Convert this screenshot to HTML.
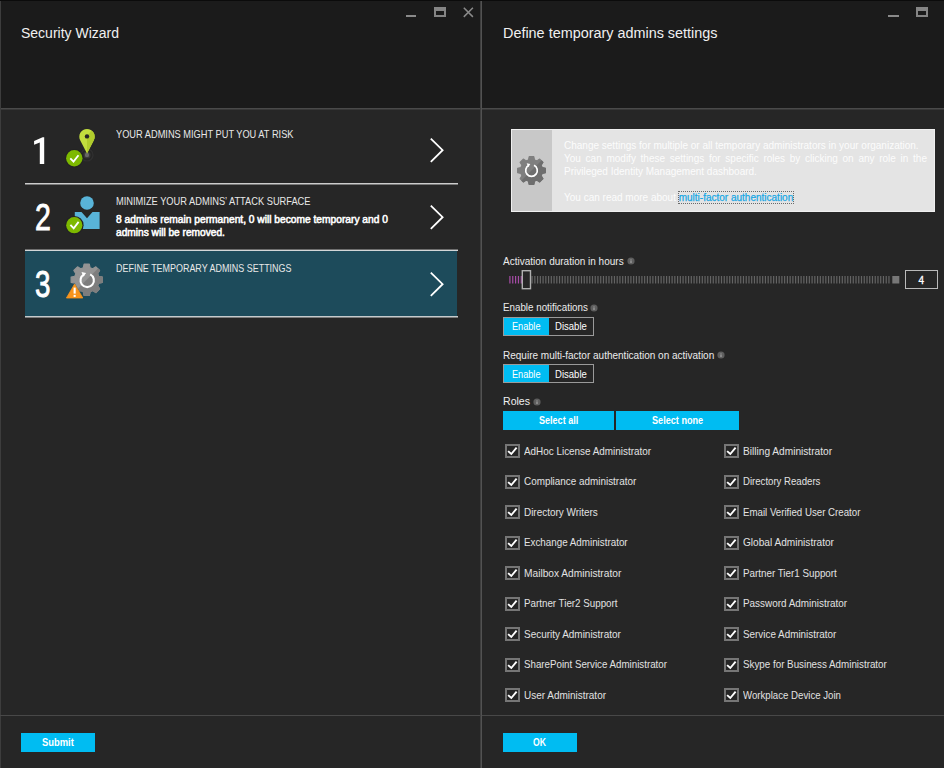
<!DOCTYPE html>
<html><head><meta charset="utf-8">
<style>
*{margin:0;padding:0;box-sizing:border-box}
html,body{width:944px;height:768px;overflow:hidden;background:#262626;font-family:"Liberation Sans",sans-serif;color:#fff}
.a{position:absolute;white-space:nowrap;line-height:1;transform-origin:0 0}
</style></head><body>
<div style="position:absolute;left:0;top:0;width:481px;height:108px;background:#1b1b1b"></div>
<div style="position:absolute;left:0;top:108px;width:481px;height:1px;background:#4a4a4a"></div>
<div style="position:absolute;left:0;top:109px;width:481px;height:1px;background:#383838"></div>
<div style="position:absolute;left:0;top:0;width:1px;height:768px;background:#3d3d3d"></div>
<div class="a" style="left:21.00px;top:26.15px;font-size:14px;color:#f0f0f0;">Security Wizard</div>
<div style="position:absolute;left:406px;top:15px;width:10px;height:2px;background:#8a8a8a"></div>
<div style="position:absolute;left:434px;top:7px;width:11.5px;height:10px;border:2px solid #858585;border-top-width:4px"></div>
<svg class="a" style="left:462px;top:5.5px" width="13" height="13" viewBox="0 0 13 13"><path d="M1.8 1.8L10.9 10.9M10.9 1.8L1.8 10.9" stroke="#8a8a8a" stroke-width="1.5"/></svg>
<div style="position:absolute;left:25px;top:251px;width:432px;height:65px;background:#1d4b5b"></div>
<div style="position:absolute;left:25px;top:183px;width:433px;height:1px;background:#cccccc"></div>
<div style="position:absolute;left:25px;top:184px;width:433px;height:1px;background:#787878"></div>
<div style="position:absolute;left:25px;top:249px;width:433px;height:1px;background:#6e6e6e"></div>
<div style="position:absolute;left:25px;top:250px;width:433px;height:1px;background:#d2d6d8"></div>
<div style="position:absolute;left:25px;top:316px;width:433px;height:1px;background:#c6cbcd"></div>
<div style="position:absolute;left:25px;top:317px;width:433px;height:1px;background:#7c7c7c"></div>
<svg class="a" style="left:0;top:0" width="60" height="170" viewBox="0 0 60 170"><path d="M44.2 137.2V163.9H39.8V142.6L34.1 144.8V140.9L42.6 137.2Z" fill="#fff"/></svg>
<div class="a" style="left:35.00px;top:198.98px;font-size:37px;color:#fff;transform:scaleX(0.7694);-webkit-text-stroke:0.9px #fff;">2</div>
<div class="a" style="left:35.20px;top:266.08px;font-size:37px;color:#fff;transform:scaleX(0.7499);-webkit-text-stroke:0.9px #fff;">3</div>
<div class="a" style="left:115.50px;top:129.41px;font-size:10.5px;color:#e8e8e8;transform:scaleX(0.8809);">YOUR ADMINS MIGHT PUT YOU AT RISK</div>
<div class="a" style="left:115.50px;top:196.41px;font-size:10.5px;color:#e8e8e8;transform:scaleX(0.8836);">MINIMIZE YOUR ADMINS’ ATTACK SURFACE</div>
<div class="a" style="left:115.80px;top:213.71px;font-size:10.5px;color:#fff;transform:scaleX(0.9726);-webkit-text-stroke:0.55px #fff;">8 admins remain permanent, 0 will become temporary and 0</div>
<div class="a" style="left:115.80px;top:226.91px;font-size:10.5px;color:#fff;transform:scaleX(0.9670);-webkit-text-stroke:0.55px #fff;">admins will be removed.</div>
<div class="a" style="left:115.50px;top:263.41px;font-size:10.5px;color:#e8e8e8;transform:scaleX(0.8521);">DEFINE TEMPORARY ADMINS SETTINGS</div>
<svg class="a" style="left:420px;top:130.2px" width="30" height="40" viewBox="0 0 30 40"><path d="M10.8 8.6L22.6 20.2L10.8 31.8" fill="none" stroke="#fff" stroke-width="1.8"/></svg>
<svg class="a" style="left:420px;top:197px" width="30" height="40" viewBox="0 0 30 40"><path d="M10.8 8.6L22.6 20.2L10.8 31.8" fill="none" stroke="#fff" stroke-width="1.8"/></svg>
<svg class="a" style="left:420px;top:264px" width="30" height="40" viewBox="0 0 30 40"><path d="M10.8 8.6L22.6 20.2L10.8 31.8" fill="none" stroke="#fff" stroke-width="1.8"/></svg>
<svg class="a" style="left:60px;top:120px" width="50" height="50" viewBox="0 0 50 50">
  <circle cx="27" cy="35" r="6" fill="none" stroke="#303030" stroke-width="1.2"/>
  <circle cx="27" cy="35" r="3.6" fill="#383838"/>
  <circle cx="27" cy="35" r="2.2" fill="#666"/>
  <path d="M27 33.5 L20.3 20.5 A7.7 7.7 0 1 1 33.7 20.5 Z" fill="#c2de3e"/>
  <path d="M27 33.5 L33.7 20.5 A7.7 7.7 0 0 0 31.5 10.5 L27 16.4 Z" fill="#b0cc2c"/>
  <circle cx="27" cy="16.4" r="2.2" fill="#262626"/>
  <circle cx="14.3" cy="38.3" r="9.2" fill="#232323"/>
  <circle cx="14.3" cy="38.3" r="8.2" fill="#7db900"/>
  <path d="M10.3 38.3L13.5 41.6L18.5 35.3" fill="none" stroke="#fff" stroke-width="1.8"/>
</svg>
<svg class="a" style="left:60px;top:190px" width="50" height="50" viewBox="0 0 50 50">
  <circle cx="27" cy="13" r="6.8" fill="#59b4d9"/>
  <path d="M14.8 22.1H21.5L27 28.3L32.5 22.1H39.6V39H14.8Z" fill="#59b4d9"/>
  <circle cx="14.3" cy="35.2" r="9.3" fill="#232323"/>
  <circle cx="14.3" cy="35.2" r="8.1" fill="#7db900"/>
  <path d="M10.4 34.8L13.7 38.4L18.6 31.9" fill="none" stroke="#fff" stroke-width="1.8"/>
</svg>
<svg class="a" style="left:60px;top:255px" width="50" height="50" viewBox="0 0 50 50">
  <defs><clipPath id="g1"><path d="M18 -18L-18 18H18Z"/></clipPath></defs>
  <g transform="translate(26.7 24.7)">
    <path d="M-3.42 -11.92L-2.61 -15.58L2.61 -15.58L3.42 -11.92L6.01 -10.85L9.18 -12.86L12.86 -9.18L10.85 -6.01L11.92 -3.42L15.58 -2.61L15.58 2.61L11.92 3.42L10.85 6.01L12.86 9.18L9.18 12.86L6.01 10.85L3.42 11.92L2.61 15.58L-2.61 15.58L-3.42 11.92L-6.01 10.85L-9.18 12.86L-12.86 9.18L-10.85 6.01L-11.92 3.42L-15.58 2.61L-15.58 -2.61L-11.92 -3.42L-10.85 -6.01L-12.86 -9.18L-9.18 -12.86L-6.01 -10.85Z" fill="#949494" stroke="#949494" stroke-width="1.2" stroke-linejoin="round"/>
    <path d="M-3.42 -11.92L-2.61 -15.58L2.61 -15.58L3.42 -11.92L6.01 -10.85L9.18 -12.86L12.86 -9.18L10.85 -6.01L11.92 -3.42L15.58 -2.61L15.58 2.61L11.92 3.42L10.85 6.01L12.86 9.18L9.18 12.86L6.01 10.85L3.42 11.92L2.61 15.58L-2.61 15.58L-3.42 11.92L-6.01 10.85L-9.18 12.86L-12.86 9.18L-10.85 6.01L-11.92 3.42L-15.58 2.61L-15.58 -2.61L-11.92 -3.42L-10.85 -6.01L-12.86 -9.18L-9.18 -12.86L-6.01 -10.85Z" fill="#7e7e7e" stroke="#7e7e7e" stroke-width="1.2" stroke-linejoin="round" clip-path="url(#g1)"/>
    <path d="M-2.5 -5.3A6.7 6.7 0 1 0 3.5 -5.3" fill="none" stroke="#fff" stroke-width="2.1"/>
    <path d="M-5.2 -7.8L-0.6 -6.6L-3.4 -3Z" fill="#fff"/>
  </g>
  <path d="M14.6 28.2L5.4 43.6H23.8Z" fill="#1f4a59"/>
  <path d="M14.6 29L6.4 43H22.8Z" fill="#f7941d" stroke="#f7941d" stroke-width="0.8" stroke-linejoin="round"/>
  <rect x="13.6" y="32.6" width="2.1" height="6" fill="#fff"/>
  <rect x="13.6" y="39.9" width="2.1" height="2" fill="#fff"/>
</svg>
<div style="position:absolute;left:0;top:715px;width:481px;height:1px;background:#484848"></div>
<div style="position:absolute;left:21px;top:733px;width:74px;height:19px;background:#00bcf2"></div>
<div class="a" style="left:42.00px;top:737.41px;font-size:10.5px;font-weight:bold;color:#fff;transform:scaleX(0.8934);">Submit</div>
<div style="position:absolute;left:480px;top:0;width:1px;height:768px;background:#3e3e3e"></div>
<div style="position:absolute;left:481px;top:0;width:1px;height:768px;background:#525252"></div>
<div style="position:absolute;left:482px;top:0;width:462px;height:108px;background:#1b1b1b"></div>
<div style="position:absolute;left:482px;top:108px;width:462px;height:1px;background:#4a4a4a"></div>
<div style="position:absolute;left:482px;top:109px;width:462px;height:1px;background:#383838"></div>
<div class="a" style="left:503.00px;top:26.15px;font-size:14px;color:#f0f0f0;transform:scaleX(1.0286);">Define temporary admins settings</div>
<div style="position:absolute;left:888px;top:15px;width:11px;height:2px;background:#8a8a8a"></div>
<div style="position:absolute;left:916px;top:7px;width:12px;height:10px;border:2px solid #858585;border-top-width:4px"></div>
<div style="position:absolute;left:511px;top:129px;width:424px;height:83px;background:#e4e4e4;border:1px solid #efefef"></div>
<div style="position:absolute;left:512px;top:130px;width:40px;height:81px;background:#c8c8c8"></div>
<div style="position:absolute;left:564px;top:139px;width:363px;font-size:10px;line-height:13.1px;color:#fcfcfc;text-align:justify">Change settings for multiple or all temporary administrators in your organization.<br>You can modify these settings for specific roles by clicking on any role in the Privileged Identity Management dashboard.<br><br>You can read more about <span style="color:#19a8e4;-webkit-text-stroke:0.25px #19a8e4;outline:1px dotted #6a6a6a;outline-offset:0.5px">multi-factor authentication</span></div>
<svg class="a" style="left:512px;top:151px" width="40" height="40" viewBox="0 0 40 40">
 <defs><clipPath id="g2"><path d="M16 -16L-16 16H16Z"/></clipPath></defs>
 <g transform="translate(19.5 19.5)"><path d="M-3.03 -10.57L-2.33 -13.91L2.33 -13.91L3.03 -10.57L5.33 -9.62L8.19 -11.48L11.48 -8.19L9.62 -5.33L10.57 -3.03L13.91 -2.33L13.91 2.33L10.57 3.03L9.62 5.33L11.48 8.19L8.19 11.48L5.33 9.62L3.03 10.57L2.33 13.91L-2.33 13.91L-3.03 10.57L-5.33 9.62L-8.19 11.48L-11.48 8.19L-9.62 5.33L-10.57 3.03L-13.91 2.33L-13.91 -2.33L-10.57 -3.03L-9.62 -5.33L-11.48 -8.19L-8.19 -11.48L-5.33 -9.62Z" fill="#7f7f7f" stroke="#7f7f7f" stroke-width="1.1" stroke-linejoin="round"/><path d="M-3.03 -10.57L-2.33 -13.91L2.33 -13.91L3.03 -10.57L5.33 -9.62L8.19 -11.48L11.48 -8.19L9.62 -5.33L10.57 -3.03L13.91 -2.33L13.91 2.33L10.57 3.03L9.62 5.33L11.48 8.19L8.19 11.48L5.33 9.62L3.03 10.57L2.33 13.91L-2.33 13.91L-3.03 10.57L-5.33 9.62L-8.19 11.48L-11.48 8.19L-9.62 5.33L-10.57 3.03L-13.91 2.33L-13.91 -2.33L-10.57 -3.03L-9.62 -5.33L-11.48 -8.19L-8.19 -11.48L-5.33 -9.62Z" fill="#6e6e6e" stroke="#6e6e6e" stroke-width="1.1" stroke-linejoin="round" clip-path="url(#g2)"/>
 <path d="M-2.5 -5.2A5.8 5.8 0 1 0 2.5 -5.2" fill="none" stroke="#fff" stroke-width="1.7"/><path d="M-4.8 -7.2L-1.2 -6.6L-3.3 -3.6Z" fill="#fff"/></g>
</svg>
<div class="a" style="left:503.00px;top:256.74px;font-size:10px;color:#ececec;">Activation duration in hours</div>
<svg class="a" style="left:626.50px;top:257.20px" width="8" height="8" viewBox="0 0 8 8"><circle cx="4" cy="4" r="3.6" fill="#5e5e5e"/><rect x="3.5" y="3.4" width="1" height="2.6" fill="#b0b0b0"/><rect x="3.5" y="2" width="1" height="0.9" fill="#909090"/></svg>
<svg class="a" style="left:503px;top:270px" width="400" height="20" viewBox="0 0 400 20"><rect x="6.30" y="6" width="1.2" height="7.5" fill="#a64ca6"/><rect x="9.15" y="6" width="1.2" height="7.5" fill="#a64ca6"/><rect x="12.00" y="6" width="1.2" height="7.5" fill="#a64ca6"/><rect x="14.85" y="6" width="1.2" height="7.5" fill="#a64ca6"/><rect x="17.70" y="6" width="1.2" height="7.5" fill="#a64ca6"/><rect x="28.50" y="6" width="1.2" height="7.5" fill="#646464"/><rect x="31.25" y="6" width="1.2" height="7.5" fill="#646464"/><rect x="33.99" y="6" width="1.2" height="7.5" fill="#646464"/><rect x="36.74" y="6" width="1.2" height="7.5" fill="#646464"/><rect x="39.48" y="6" width="1.2" height="7.5" fill="#646464"/><rect x="42.23" y="6" width="1.2" height="7.5" fill="#646464"/><rect x="44.97" y="6" width="1.2" height="7.5" fill="#646464"/><rect x="47.72" y="6" width="1.2" height="7.5" fill="#646464"/><rect x="50.46" y="6" width="1.2" height="7.5" fill="#646464"/><rect x="53.21" y="6" width="1.2" height="7.5" fill="#646464"/><rect x="55.95" y="6" width="1.2" height="7.5" fill="#646464"/><rect x="58.70" y="6" width="1.2" height="7.5" fill="#646464"/><rect x="61.44" y="6" width="1.2" height="7.5" fill="#646464"/><rect x="64.19" y="6" width="1.2" height="7.5" fill="#646464"/><rect x="66.93" y="6" width="1.2" height="7.5" fill="#646464"/><rect x="69.68" y="6" width="1.2" height="7.5" fill="#646464"/><rect x="72.42" y="6" width="1.2" height="7.5" fill="#646464"/><rect x="75.17" y="6" width="1.2" height="7.5" fill="#646464"/><rect x="77.91" y="6" width="1.2" height="7.5" fill="#646464"/><rect x="80.66" y="6" width="1.2" height="7.5" fill="#646464"/><rect x="83.40" y="6" width="1.2" height="7.5" fill="#646464"/><rect x="86.15" y="6" width="1.2" height="7.5" fill="#646464"/><rect x="88.89" y="6" width="1.2" height="7.5" fill="#646464"/><rect x="91.64" y="6" width="1.2" height="7.5" fill="#646464"/><rect x="94.38" y="6" width="1.2" height="7.5" fill="#646464"/><rect x="97.13" y="6" width="1.2" height="7.5" fill="#646464"/><rect x="99.87" y="6" width="1.2" height="7.5" fill="#646464"/><rect x="102.62" y="6" width="1.2" height="7.5" fill="#646464"/><rect x="105.36" y="6" width="1.2" height="7.5" fill="#646464"/><rect x="108.11" y="6" width="1.2" height="7.5" fill="#646464"/><rect x="110.85" y="6" width="1.2" height="7.5" fill="#646464"/><rect x="113.60" y="6" width="1.2" height="7.5" fill="#646464"/><rect x="116.34" y="6" width="1.2" height="7.5" fill="#646464"/><rect x="119.09" y="6" width="1.2" height="7.5" fill="#646464"/><rect x="121.83" y="6" width="1.2" height="7.5" fill="#646464"/><rect x="124.58" y="6" width="1.2" height="7.5" fill="#646464"/><rect x="127.32" y="6" width="1.2" height="7.5" fill="#646464"/><rect x="130.07" y="6" width="1.2" height="7.5" fill="#646464"/><rect x="132.81" y="6" width="1.2" height="7.5" fill="#646464"/><rect x="135.56" y="6" width="1.2" height="7.5" fill="#646464"/><rect x="138.30" y="6" width="1.2" height="7.5" fill="#646464"/><rect x="141.05" y="6" width="1.2" height="7.5" fill="#646464"/><rect x="143.79" y="6" width="1.2" height="7.5" fill="#646464"/><rect x="146.54" y="6" width="1.2" height="7.5" fill="#646464"/><rect x="149.28" y="6" width="1.2" height="7.5" fill="#646464"/><rect x="152.03" y="6" width="1.2" height="7.5" fill="#646464"/><rect x="154.77" y="6" width="1.2" height="7.5" fill="#646464"/><rect x="157.52" y="6" width="1.2" height="7.5" fill="#646464"/><rect x="160.26" y="6" width="1.2" height="7.5" fill="#646464"/><rect x="163.01" y="6" width="1.2" height="7.5" fill="#646464"/><rect x="165.75" y="6" width="1.2" height="7.5" fill="#646464"/><rect x="168.50" y="6" width="1.2" height="7.5" fill="#646464"/><rect x="171.24" y="6" width="1.2" height="7.5" fill="#646464"/><rect x="173.99" y="6" width="1.2" height="7.5" fill="#646464"/><rect x="176.73" y="6" width="1.2" height="7.5" fill="#646464"/><rect x="179.48" y="6" width="1.2" height="7.5" fill="#646464"/><rect x="182.22" y="6" width="1.2" height="7.5" fill="#646464"/><rect x="184.97" y="6" width="1.2" height="7.5" fill="#646464"/><rect x="187.71" y="6" width="1.2" height="7.5" fill="#646464"/><rect x="190.46" y="6" width="1.2" height="7.5" fill="#646464"/><rect x="193.20" y="6" width="1.2" height="7.5" fill="#646464"/><rect x="195.95" y="6" width="1.2" height="7.5" fill="#646464"/><rect x="198.69" y="6" width="1.2" height="7.5" fill="#646464"/><rect x="201.44" y="6" width="1.2" height="7.5" fill="#646464"/><rect x="204.18" y="6" width="1.2" height="7.5" fill="#646464"/><rect x="206.93" y="6" width="1.2" height="7.5" fill="#646464"/><rect x="209.67" y="6" width="1.2" height="7.5" fill="#646464"/><rect x="212.42" y="6" width="1.2" height="7.5" fill="#646464"/><rect x="215.16" y="6" width="1.2" height="7.5" fill="#646464"/><rect x="217.91" y="6" width="1.2" height="7.5" fill="#646464"/><rect x="220.65" y="6" width="1.2" height="7.5" fill="#646464"/><rect x="223.40" y="6" width="1.2" height="7.5" fill="#646464"/><rect x="226.14" y="6" width="1.2" height="7.5" fill="#646464"/><rect x="228.89" y="6" width="1.2" height="7.5" fill="#646464"/><rect x="231.63" y="6" width="1.2" height="7.5" fill="#646464"/><rect x="234.38" y="6" width="1.2" height="7.5" fill="#646464"/><rect x="237.12" y="6" width="1.2" height="7.5" fill="#646464"/><rect x="239.87" y="6" width="1.2" height="7.5" fill="#646464"/><rect x="242.61" y="6" width="1.2" height="7.5" fill="#646464"/><rect x="245.36" y="6" width="1.2" height="7.5" fill="#646464"/><rect x="248.10" y="6" width="1.2" height="7.5" fill="#646464"/><rect x="250.85" y="6" width="1.2" height="7.5" fill="#646464"/><rect x="253.59" y="6" width="1.2" height="7.5" fill="#646464"/><rect x="256.34" y="6" width="1.2" height="7.5" fill="#646464"/><rect x="259.08" y="6" width="1.2" height="7.5" fill="#646464"/><rect x="261.83" y="6" width="1.2" height="7.5" fill="#646464"/><rect x="264.57" y="6" width="1.2" height="7.5" fill="#646464"/><rect x="267.32" y="6" width="1.2" height="7.5" fill="#646464"/><rect x="270.06" y="6" width="1.2" height="7.5" fill="#646464"/><rect x="272.81" y="6" width="1.2" height="7.5" fill="#646464"/><rect x="275.55" y="6" width="1.2" height="7.5" fill="#646464"/><rect x="278.30" y="6" width="1.2" height="7.5" fill="#646464"/><rect x="281.04" y="6" width="1.2" height="7.5" fill="#646464"/><rect x="283.79" y="6" width="1.2" height="7.5" fill="#646464"/><rect x="286.53" y="6" width="1.2" height="7.5" fill="#646464"/><rect x="289.28" y="6" width="1.2" height="7.5" fill="#646464"/><rect x="292.02" y="6" width="1.2" height="7.5" fill="#646464"/><rect x="294.77" y="6" width="1.2" height="7.5" fill="#646464"/><rect x="297.51" y="6" width="1.2" height="7.5" fill="#646464"/><rect x="300.26" y="6" width="1.2" height="7.5" fill="#646464"/><rect x="303.00" y="6" width="1.2" height="7.5" fill="#646464"/><rect x="305.75" y="6" width="1.2" height="7.5" fill="#646464"/><rect x="308.49" y="6" width="1.2" height="7.5" fill="#646464"/><rect x="311.24" y="6" width="1.2" height="7.5" fill="#646464"/><rect x="313.98" y="6" width="1.2" height="7.5" fill="#646464"/><rect x="316.73" y="6" width="1.2" height="7.5" fill="#646464"/><rect x="319.47" y="6" width="1.2" height="7.5" fill="#646464"/><rect x="322.22" y="6" width="1.2" height="7.5" fill="#646464"/><rect x="324.96" y="6" width="1.2" height="7.5" fill="#646464"/><rect x="327.71" y="6" width="1.2" height="7.5" fill="#646464"/><rect x="330.45" y="6" width="1.2" height="7.5" fill="#646464"/><rect x="333.20" y="6" width="1.2" height="7.5" fill="#646464"/><rect x="335.94" y="6" width="1.2" height="7.5" fill="#646464"/><rect x="338.69" y="6" width="1.2" height="7.5" fill="#646464"/><rect x="341.43" y="6" width="1.2" height="7.5" fill="#646464"/><rect x="344.18" y="6" width="1.2" height="7.5" fill="#646464"/><rect x="346.92" y="6" width="1.2" height="7.5" fill="#646464"/><rect x="349.67" y="6" width="1.2" height="7.5" fill="#646464"/><rect x="352.41" y="6" width="1.2" height="7.5" fill="#646464"/><rect x="355.16" y="6" width="1.2" height="7.5" fill="#646464"/><rect x="357.90" y="6" width="1.2" height="7.5" fill="#646464"/><rect x="360.65" y="6" width="1.2" height="7.5" fill="#646464"/><rect x="363.39" y="6" width="1.2" height="7.5" fill="#646464"/><rect x="366.14" y="6" width="1.2" height="7.5" fill="#646464"/><rect x="368.88" y="6" width="1.2" height="7.5" fill="#646464"/><rect x="371.63" y="6" width="1.2" height="7.5" fill="#646464"/><rect x="374.37" y="6" width="1.2" height="7.5" fill="#646464"/><rect x="377.12" y="6" width="1.2" height="7.5" fill="#646464"/><rect x="379.86" y="6" width="1.2" height="7.5" fill="#646464"/><rect x="382.61" y="6" width="1.2" height="7.5" fill="#646464"/><rect x="385.35" y="6" width="1.2" height="7.5" fill="#646464"/><rect x="389.3" y="6" width="7" height="7.5" fill="#777"/><rect x="19.3" y="0.7" width="8.2" height="18" fill="#262626" stroke="#b0b0b0" stroke-width="1.4"/></svg>
<div style="position:absolute;left:905px;top:270px;width:33px;height:19px;border:1.8px solid #bababa"></div>
<div class="a" style="left:918.60px;top:275.54px;font-size:10px;color:#fff;-webkit-text-stroke:0.3px #fff;">4</div>
<div class="a" style="left:503.00px;top:303.34px;font-size:10px;color:#ececec;transform:scaleX(0.9787);">Enable notifications</div>
<svg class="a" style="left:590.10px;top:303.70px" width="8" height="8" viewBox="0 0 8 8"><circle cx="4" cy="4" r="3.6" fill="#5e5e5e"/><rect x="3.5" y="3.4" width="1" height="2.6" fill="#b0b0b0"/><rect x="3.5" y="2" width="1" height="0.9" fill="#909090"/></svg>
<div style="position:absolute;left:503px;top:317.0px;width:91px;height:19px;border:1px solid #9a9a9a"></div>
<div style="position:absolute;left:504px;top:318.0px;width:45px;height:17px;background:#00bcf2"></div>
<div class="a" style="left:511.70px;top:322.14px;font-size:10px;color:#fff;transform:scaleX(0.9149);">Enable</div>
<div class="a" style="left:555.40px;top:322.14px;font-size:10px;color:#fff;transform:scaleX(0.9535);">Disable</div>
<div class="a" style="left:503.00px;top:350.74px;font-size:10px;color:#ececec;">Require multi-factor authentication on activation</div>
<svg class="a" style="left:716.90px;top:351.10px" width="8" height="8" viewBox="0 0 8 8"><circle cx="4" cy="4" r="3.6" fill="#5e5e5e"/><rect x="3.5" y="3.4" width="1" height="2.6" fill="#b0b0b0"/><rect x="3.5" y="2" width="1" height="0.9" fill="#909090"/></svg>
<div style="position:absolute;left:503px;top:364.4px;width:91px;height:19px;border:1px solid #9a9a9a"></div>
<div style="position:absolute;left:504px;top:365.4px;width:45px;height:17px;background:#00bcf2"></div>
<div class="a" style="left:511.70px;top:369.54px;font-size:10px;color:#fff;transform:scaleX(0.9149);">Enable</div>
<div class="a" style="left:555.40px;top:369.54px;font-size:10px;color:#fff;transform:scaleX(0.9535);">Disable</div>
<div class="a" style="left:503.00px;top:396.47px;font-size:11.5px;color:#f0f0f0;transform:scaleX(0.9189);">Roles</div>
<svg class="a" style="left:532.60px;top:398.40px" width="8" height="8" viewBox="0 0 8 8"><circle cx="4" cy="4" r="3.6" fill="#5e5e5e"/><rect x="3.5" y="3.4" width="1" height="2.6" fill="#b0b0b0"/><rect x="3.5" y="2" width="1" height="0.9" fill="#909090"/></svg>
<div style="position:absolute;left:503px;top:411px;width:110.5px;height:19px;background:#00bcf2"></div>
<div style="position:absolute;left:616px;top:411px;width:123px;height:19px;background:#00bcf2"></div>
<div class="a" style="left:538.70px;top:414.69px;font-size:11px;font-weight:bold;color:#fff;transform:scaleX(0.8221);">Select all</div>
<div class="a" style="left:651.80px;top:414.69px;font-size:11px;font-weight:bold;color:#fff;transform:scaleX(0.8289);">Select none</div>
<div style="position:absolute;left:505px;top:444.0px;width:15px;height:14px;border:2px solid #767676"><svg width="11" height="11" viewBox="0 0 11 11" style="position:absolute;left:0;top:0"><path d="M1.1 5.1L4.3 8.0L9.6 1.6" fill="none" stroke="#fff" stroke-width="1.9"/></svg></div>
<div class="a" style="left:524.00px;top:445.81px;font-size:10.5px;color:#e2e2e2;transform:scaleX(0.9420);">AdHoc License Administrator</div>
<div style="position:absolute;left:724px;top:444.0px;width:15px;height:14px;border:2px solid #767676"><svg width="11" height="11" viewBox="0 0 11 11" style="position:absolute;left:0;top:0"><path d="M1.1 5.1L4.3 8.0L9.6 1.6" fill="none" stroke="#fff" stroke-width="1.9"/></svg></div>
<div class="a" style="left:743.00px;top:445.81px;font-size:10.5px;color:#e2e2e2;transform:scaleX(0.9654);">Billing Administrator</div>
<div style="position:absolute;left:505px;top:474.5px;width:15px;height:14px;border:2px solid #767676"><svg width="11" height="11" viewBox="0 0 11 11" style="position:absolute;left:0;top:0"><path d="M1.1 5.1L4.3 8.0L9.6 1.6" fill="none" stroke="#fff" stroke-width="1.9"/></svg></div>
<div class="a" style="left:524.00px;top:476.31px;font-size:10.5px;color:#e2e2e2;transform:scaleX(0.9423);">Compliance administrator</div>
<div style="position:absolute;left:724px;top:474.5px;width:15px;height:14px;border:2px solid #767676"><svg width="11" height="11" viewBox="0 0 11 11" style="position:absolute;left:0;top:0"><path d="M1.1 5.1L4.3 8.0L9.6 1.6" fill="none" stroke="#fff" stroke-width="1.9"/></svg></div>
<div class="a" style="left:743.00px;top:476.31px;font-size:10.5px;color:#e2e2e2;transform:scaleX(0.9146);">Directory Readers</div>
<div style="position:absolute;left:505px;top:505.0px;width:15px;height:14px;border:2px solid #767676"><svg width="11" height="11" viewBox="0 0 11 11" style="position:absolute;left:0;top:0"><path d="M1.1 5.1L4.3 8.0L9.6 1.6" fill="none" stroke="#fff" stroke-width="1.9"/></svg></div>
<div class="a" style="left:524.00px;top:506.81px;font-size:10.5px;color:#e2e2e2;transform:scaleX(0.9453);">Directory Writers</div>
<div style="position:absolute;left:724px;top:505.0px;width:15px;height:14px;border:2px solid #767676"><svg width="11" height="11" viewBox="0 0 11 11" style="position:absolute;left:0;top:0"><path d="M1.1 5.1L4.3 8.0L9.6 1.6" fill="none" stroke="#fff" stroke-width="1.9"/></svg></div>
<div class="a" style="left:743.00px;top:506.81px;font-size:10.5px;color:#e2e2e2;transform:scaleX(0.9229);">Email Verified User Creator</div>
<div style="position:absolute;left:505px;top:535.5px;width:15px;height:14px;border:2px solid #767676"><svg width="11" height="11" viewBox="0 0 11 11" style="position:absolute;left:0;top:0"><path d="M1.1 5.1L4.3 8.0L9.6 1.6" fill="none" stroke="#fff" stroke-width="1.9"/></svg></div>
<div class="a" style="left:524.00px;top:537.31px;font-size:10.5px;color:#e2e2e2;transform:scaleX(0.9343);">Exchange Administrator</div>
<div style="position:absolute;left:724px;top:535.5px;width:15px;height:14px;border:2px solid #767676"><svg width="11" height="11" viewBox="0 0 11 11" style="position:absolute;left:0;top:0"><path d="M1.1 5.1L4.3 8.0L9.6 1.6" fill="none" stroke="#fff" stroke-width="1.9"/></svg></div>
<div class="a" style="left:743.00px;top:537.31px;font-size:10.5px;color:#e2e2e2;transform:scaleX(0.9624);">Global Administrator</div>
<div style="position:absolute;left:505px;top:566.0px;width:15px;height:14px;border:2px solid #767676"><svg width="11" height="11" viewBox="0 0 11 11" style="position:absolute;left:0;top:0"><path d="M1.1 5.1L4.3 8.0L9.6 1.6" fill="none" stroke="#fff" stroke-width="1.9"/></svg></div>
<div class="a" style="left:524.00px;top:567.81px;font-size:10.5px;color:#e2e2e2;transform:scaleX(0.9693);">Mailbox Administrator</div>
<div style="position:absolute;left:724px;top:566.0px;width:15px;height:14px;border:2px solid #767676"><svg width="11" height="11" viewBox="0 0 11 11" style="position:absolute;left:0;top:0"><path d="M1.1 5.1L4.3 8.0L9.6 1.6" fill="none" stroke="#fff" stroke-width="1.9"/></svg></div>
<div class="a" style="left:743.00px;top:567.81px;font-size:10.5px;color:#e2e2e2;transform:scaleX(0.9344);">Partner Tier1 Support</div>
<div style="position:absolute;left:505px;top:596.5px;width:15px;height:14px;border:2px solid #767676"><svg width="11" height="11" viewBox="0 0 11 11" style="position:absolute;left:0;top:0"><path d="M1.1 5.1L4.3 8.0L9.6 1.6" fill="none" stroke="#fff" stroke-width="1.9"/></svg></div>
<div class="a" style="left:524.00px;top:598.31px;font-size:10.5px;color:#e2e2e2;transform:scaleX(0.9315);">Partner Tier2 Support</div>
<div style="position:absolute;left:724px;top:596.5px;width:15px;height:14px;border:2px solid #767676"><svg width="11" height="11" viewBox="0 0 11 11" style="position:absolute;left:0;top:0"><path d="M1.1 5.1L4.3 8.0L9.6 1.6" fill="none" stroke="#fff" stroke-width="1.9"/></svg></div>
<div class="a" style="left:743.00px;top:598.31px;font-size:10.5px;color:#e2e2e2;transform:scaleX(0.9429);">Password Administrator</div>
<div style="position:absolute;left:505px;top:627.0px;width:15px;height:14px;border:2px solid #767676"><svg width="11" height="11" viewBox="0 0 11 11" style="position:absolute;left:0;top:0"><path d="M1.1 5.1L4.3 8.0L9.6 1.6" fill="none" stroke="#fff" stroke-width="1.9"/></svg></div>
<div class="a" style="left:524.00px;top:628.81px;font-size:10.5px;color:#e2e2e2;transform:scaleX(0.9480);">Security Administrator</div>
<div style="position:absolute;left:724px;top:627.0px;width:15px;height:14px;border:2px solid #767676"><svg width="11" height="11" viewBox="0 0 11 11" style="position:absolute;left:0;top:0"><path d="M1.1 5.1L4.3 8.0L9.6 1.6" fill="none" stroke="#fff" stroke-width="1.9"/></svg></div>
<div class="a" style="left:743.00px;top:628.81px;font-size:10.5px;color:#e2e2e2;transform:scaleX(0.9403);">Service Administrator</div>
<div style="position:absolute;left:505px;top:657.5px;width:15px;height:14px;border:2px solid #767676"><svg width="11" height="11" viewBox="0 0 11 11" style="position:absolute;left:0;top:0"><path d="M1.1 5.1L4.3 8.0L9.6 1.6" fill="none" stroke="#fff" stroke-width="1.9"/></svg></div>
<div class="a" style="left:524.00px;top:659.31px;font-size:10.5px;color:#e2e2e2;transform:scaleX(0.9280);">SharePoint Service Administrator</div>
<div style="position:absolute;left:724px;top:657.5px;width:15px;height:14px;border:2px solid #767676"><svg width="11" height="11" viewBox="0 0 11 11" style="position:absolute;left:0;top:0"><path d="M1.1 5.1L4.3 8.0L9.6 1.6" fill="none" stroke="#fff" stroke-width="1.9"/></svg></div>
<div class="a" style="left:743.00px;top:659.31px;font-size:10.5px;color:#e2e2e2;transform:scaleX(0.9332);">Skype for Business Administrator</div>
<div style="position:absolute;left:505px;top:688.0px;width:15px;height:14px;border:2px solid #767676"><svg width="11" height="11" viewBox="0 0 11 11" style="position:absolute;left:0;top:0"><path d="M1.1 5.1L4.3 8.0L9.6 1.6" fill="none" stroke="#fff" stroke-width="1.9"/></svg></div>
<div class="a" style="left:524.00px;top:689.81px;font-size:10.5px;color:#e2e2e2;transform:scaleX(0.9495);">User Administrator</div>
<div style="position:absolute;left:724px;top:688.0px;width:15px;height:14px;border:2px solid #767676"><svg width="11" height="11" viewBox="0 0 11 11" style="position:absolute;left:0;top:0"><path d="M1.1 5.1L4.3 8.0L9.6 1.6" fill="none" stroke="#fff" stroke-width="1.9"/></svg></div>
<div class="a" style="left:743.00px;top:689.81px;font-size:10.5px;color:#e2e2e2;transform:scaleX(0.9191);">Workplace Device Join</div>
<div style="position:absolute;left:482px;top:715px;width:462px;height:1px;background:#484848"></div>
<div style="position:absolute;left:503px;top:733px;width:74px;height:19px;background:#00bcf2"></div>
<div class="a" style="left:533.00px;top:737.21px;font-size:10.5px;font-weight:bold;color:#fff;transform:scaleX(0.8254);">OK</div>
<div style="position:absolute;left:0;top:0;width:944px;height:1px;background:#0b0b0b"></div>
</body></html>
